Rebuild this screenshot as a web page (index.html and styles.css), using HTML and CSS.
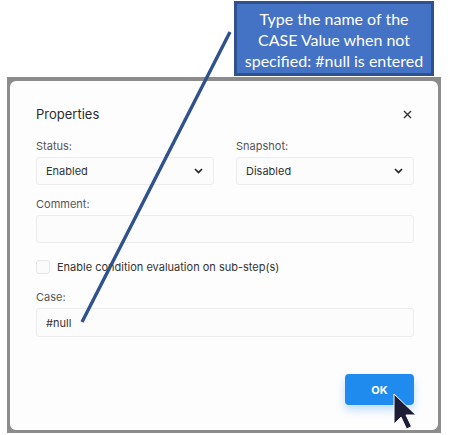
FILE: index.html
```html
<!DOCTYPE html>
<html>
<head>
<meta charset="utf-8">
<link rel="stylesheet" href="styles.css">
</head>
<body>
<div class="stage">
  <div class="top-row">
    <div class="callout">Type the name of the<br>CASE Value when not<br>specified: #null is entered</div>
  </div>
  <div class="backdrop">
    <div class="dialog">
      <div class="header">
        <span class="title">Properties</span>
        <svg class="close" width="9" height="9" viewBox="0 0 9 9"><path d="M1 1L8 8M8 1L1 8" stroke="#333" stroke-width="1.4" fill="none"/></svg>
      </div>
      <div class="row2">
        <div class="field">
          <div class="label">Status:</div>
          <div class="select"><span>Enabled</span><svg width="9" height="6" viewBox="0 0 9 6"><path d="M1 1L4.5 4.5L8 1" stroke="#222" stroke-width="1.6" fill="none"/></svg></div>
        </div>
        <div class="field">
          <div class="label">Snapshot:</div>
          <div class="select"><span>Disabled</span><svg width="9" height="6" viewBox="0 0 9 6"><path d="M1 1L4.5 4.5L8 1" stroke="#222" stroke-width="1.6" fill="none"/></svg></div>
        </div>
      </div>
      <div class="field comment">
        <div class="label">Comment:</div>
        <div class="input"></div>
      </div>
      <div class="check-row">
        <span class="checkbox"></span>
        <span class="check-label">Enable condition evaluation on sub-step(s)</span>
      </div>
      <div class="field case">
        <div class="label">Case:</div>
        <div class="input"><span>#null</span></div>
      </div>
      <div class="footer">
        <button class="ok">OK</button>
      </div>
    </div>
  </div>
  <svg class="overlay" width="450" height="435" viewBox="0 0 450 435">
    <line x1="230" y1="32" x2="82" y2="322" stroke="#2f528f" stroke-width="3.4"/>
    <path d="M394 394 L394 424 L401 417 L406.5 429 L411.5 426.5 L406 415 L416 415 Z" fill="#1d1d38" stroke="#ffffff" stroke-width="1" stroke-linejoin="round"/>
  </svg>
</div>
</body>
</html>
```

FILE: styles.css
```css
* { box-sizing: border-box; }
html, body { margin: 0; padding: 0; background: #ffffff; }
body { font-family: Inter, "Noto Sans", sans-serif; color: #333; }

.stage { position: relative; width: 450px; height: 435px; overflow: hidden; }

.top-row { height: 77px; padding-top: 1px; }
.callout {
  margin-left: 234px;
  width: 200px;
  height: 75px;
  background: #4472c4;
  border: 3px solid #2f528f;
  color: #ffffff;
  font-family: Lato, "Open Sans", sans-serif;
  font-size: 16px;
  line-height: 21px;
  text-align: center;
  padding-top: 4px;
  white-space: nowrap;
}

.backdrop {
  margin-left: 7px;
  width: 434px;
  height: 356px;
  background: #8c8c8c;
  padding: 4px 3px 3px 3px;
}
.dialog {
  height: 349px;
  background: #fdfdfe;
  border-radius: 6px;
  padding: 23px 24px 0 26px;
}

.header { display: flex; align-items: center; justify-content: space-between; height: 20px; }
.title { font-size: 13px; color: #2d2d2d; }
.close { margin-right: 2px; }

.label { font-size: 11px; line-height: 14px; color: #555; }
.row2 { display: grid; grid-template-columns: 178px 178px; column-gap: 22px; margin-top: 15px; }

.select, .input {
  margin-top: 4px;
  height: 28px;
  border: 1px solid #ececee;
  border-radius: 3px;
  background: #fcfcfd;
  display: flex;
  align-items: center;
  padding: 0 10px 0 9px;
  font-size: 11px;
  color: #333;
}
.select { justify-content: space-between; }

.comment { margin-top: 12px; }

.check-row { display: flex; align-items: center; margin-top: 17px; height: 14px; gap: 7px; }
.checkbox { width: 14px; height: 14px; border: 1px solid #e6e6e8; border-radius: 3px; background: #fbfbfc; }
.check-label { font-size: 11px; color: #333; }

.case { margin-top: 16px; }
.case .input { height: 29px; }

.footer { display: flex; justify-content: flex-end; margin-top: 37px; }
.ok {
  width: 69px;
  height: 31px;
  border: none;
  border-radius: 4px;
  background: #1f8bef;
  color: #ffffff;
  font-family: Inter, "Noto Sans", sans-serif;
  font-weight: 700;
  font-size: 11px;
  box-shadow: 0 5px 9px rgba(31, 139, 239, 0.28);
}

.overlay { position: absolute; left: 0; top: 0; pointer-events: none; }
```
